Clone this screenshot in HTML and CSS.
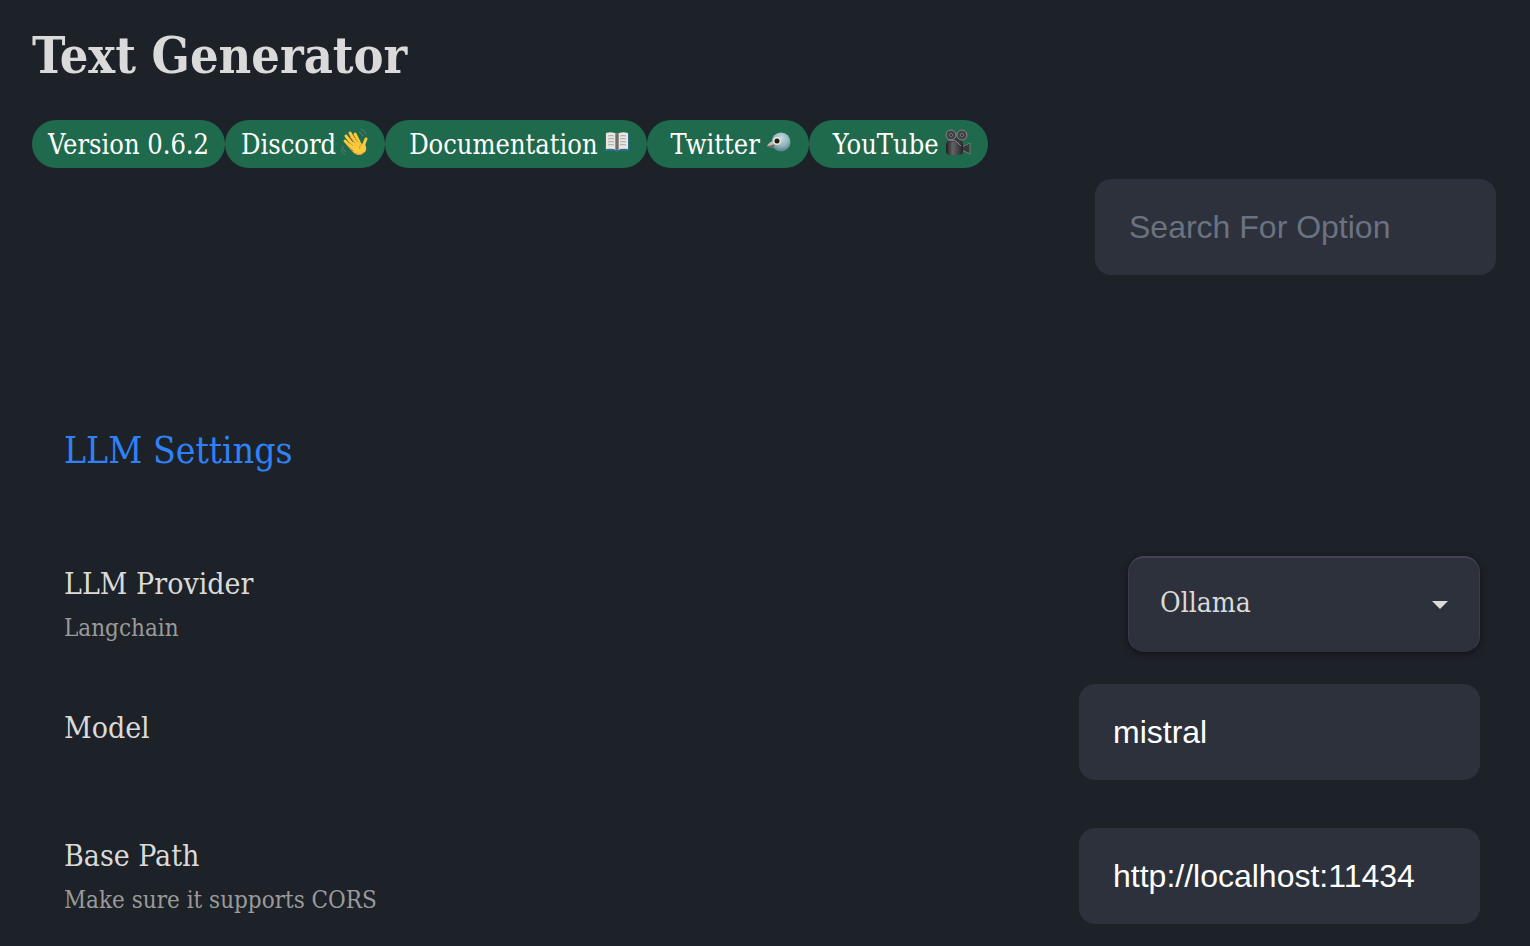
FILE: index.html
```html
<!DOCTYPE html>
<html lang="en">
<head>
    <meta charset="utf-8" />
    <title>Text Generator</title>
    <link rel="stylesheet" href="styles.css">
</head>
<body>
    <header class="header">
        <h1>Text Generator</h1>

        <nav class="badges">
            <a class="badge" href="#">Version 0.6.2</a>
            <a class="badge" href="#">Discord
                <svg class="icon" viewBox="0 0 28 28" aria-hidden="true">
                    <g fill="none" stroke="#fbc93d" stroke-width="3" stroke-linecap="round">
                        <path d="M11 20L4 13M12 17L5 8M15 15L9 5M18 14L14 6" />
                        <path d="M22 18L25 11" />
                    </g>
                    <path d="M8 16l9-5 4 5 3 0q3 6-1 9-5 4-10 0z" fill="#fbc93d" />
                    <path d="M5 16l7 8c4 3 8 3 11 0" fill="none" stroke="#e5962a" />
                    <path d="M7 13l5 5M9 9l5 6M13 8l4 6M21 16c-2 1-3 3-2 5" fill="none" stroke="#dd951f" />
                    <path d="M18 4q3 1 4 4M20 1q4 2 5 5M1 18q1 4 4 6M0 21q1 4 4 6" fill="none" stroke="#5f7a72" />
                </svg>
            </a>
            <a class="badge spaced" href="#">Documentation
                <svg class="icon" viewBox="0 0 28 28" aria-hidden="true">
                    <path d="M2 6h24v17H16l-2 1-2-1H2z" fill="#2f6d8e" />
                    <path d="M3 5q6-2 11 1 5-3 11-1v16q-6-1-11 1-5-2-11-1z" fill="#e9e7e2" />
                    <path d="M12 5l2 1 2-1v16l-2 1-2-1z" fill="#96938f" />
                    <path d="M14 6v16" stroke="#4b4947" />
                    <path d="M5 8q3-1 6 0M5 11q3-1 6 0M5 14q3-1 6 0M5 17q3-1 6 0M17 8q3-1 6 0M17 11q3-1 6 0M17 14q3-1 6 0M17 17q3-1 6 0" fill="none" stroke="#aaa8a5" />
                </svg>
            </a>
            <a class="badge spaced" href="#">Twitter
                <svg class="icon" viewBox="0 0 28 28" aria-hidden="true">
                    <defs>
                        <radialGradient id="bird" cx=".5" cy=".3" r=".7">
                            <stop offset="0" stop-color="#c1dde1" />
                            <stop offset=".6" stop-color="#8fb4ba" />
                            <stop offset="1" stop-color="#527f86" />
                        </radialGradient>
                    </defs>
                    <circle cx="16" cy="14" r="9.5" fill="url(#bird)" />
                    <path d="M8 13q-4 1-6 5l5 2q3-1 3-5z" fill="#c3b8b3" />
                    <path d="M2 18l5 2q2-1 3-4-4 2-8 2z" fill="#695f5c" />
                    <circle cx="12" cy="13" r="4" fill="#e8e3d8" />
                    <circle cx="12" cy="13" r="2.5" fill="#211d1c" />
                </svg>
            </a>
            <a class="badge spaced" href="#">YouTube
                <svg class="icon" viewBox="0 0 28 28" aria-hidden="true">
                    <defs>
                        <linearGradient id="camera" x2="1">
                            <stop offset="0" stop-color="#1d1d20" />
                            <stop offset=".4" stop-color="#626267" />
                            <stop offset="1" stop-color="#252528" />
                        </linearGradient>
                    </defs>
                    <path d="M18 19l8-4v11l-8-4z" fill="#38383b" stroke="#77777c" />
                    <rect x="2" y="13" width="17" height="14" rx="4" fill="url(#camera)" />
                    <path d="M6 8l11 1 2 5H3z" fill="#38383b" />
                    <circle cx="7" cy="7" r="5" fill="#434347" stroke="#85858a" />
                    <circle cx="18" cy="7" r="5" fill="#434347" stroke="#85858a" />
                    <circle cx="7" cy="7" r="1.5" fill="#202024" stroke="#77777c" />
                    <circle cx="18" cy="7" r="1.500" fill="#202024" stroke="#77777c" />
                    <path d="M4 12l8 1 5 5" fill="none" stroke="#85858a" />
                </svg>
            </a>
        </nav>

        <input class="field search" type="search" placeholder="Search For Option" aria-label="Search For Option" />
    </header>

    <main class="settings">
        <h2>LLM Settings</h2>

        <div class="row">
            <div class="info">
                <label for="provider">LLM Provider</label>
                <p>Langchain</p>
            </div>
            <div class="select-box">
                <select id="provider">
                    <option>Ollama</option>
                </select>
                <svg class="arrow" viewBox="0 0 16 8" aria-hidden="true"><path d="M0 0h16L8 8z" /></svg>
            </div>
        </div>

        <div class="row">
            <div class="info">
                <label for="model">Model</label>
            </div>
            <input class="field" id="model" type="text" value="mistral" />
        </div>

        <div class="row">
            <div class="info">
                <label for="basepath">Base Path</label>
                <p>Make sure it supports CORS</p>
            </div>
            <input class="field" id="basepath" type="text" value="http://localhost:11434" />
        </div>
    </main>
</body>
</html>
```

FILE: styles.css
```css
* {
    box-sizing: border-box;
}
body {
    margin: 0;
    background-color: #1d2128;
    color: #dadada;
    font-family: "DejaVu Serif Condensed", "DejaVu Serif", serif;
}
h1, h2, p {
    margin: 0;
}
.header {
    display: flex;
    flex-direction: column;
    padding: 24px 34px 0 32px;
}
h1 {
    font-size: 50px;
    line-height: 64px;
    margin-bottom: 32px;
}
.badges {
    display: flex;
    flex-wrap: wrap;
}
.badge {
    display: flex;
    align-items: center;
    gap: 5px;
    height: 48px;
    padding: 0 16px;
    border-radius: 24px;
    background-color: #1f6a4c;
    color: #ffffff;
    font-size: 27px;
    text-decoration: none;
}
.spaced {
    padding-left: 24px;
}
.icon {
    width: 28px;
    height: 28px;
    margin-bottom: 4px;
}
.field {
    width: 401px;
    height: 96px;
    padding: 0 34px;
    border: none;
    border-radius: 16px;
    background-color: #2d313b;
    color: #ffffff;
    font-family: "Liberation Sans", Arial, sans-serif;
    font-size: 32px;
}
.search {
    align-self: flex-end;
    margin-top: 11px;
}
.search::placeholder {
    color: #6b7280;
}
.settings {
    padding: 144px 50px 22px 64px;
}
h2 {
    color: #2f81f7;
    font-size: 37px;
    font-weight: normal;
    line-height: 64px;
    margin-bottom: 73px;
}
.row {
    display: flex;
    justify-content: space-between;
    align-items: center;
    margin-bottom: 48px;
}
.row:first-of-type {
    margin-bottom: 32px;
}
.row:last-child {
    margin-bottom: 0;
}
.info label {
    display: block;
    font-size: 30px;
    line-height: 48px;
}
.info label:only-child {
    padding-bottom: 8px;
}
.info p {
    color: #9a9a9a;
    font-size: 24px;
    line-height: 40px;
}
.select-box {
    position: relative;
    width: 352px;
}
.select-box select {
    appearance: none;
    width: 100%;
    height: 96px;
    padding: 0 32px 4px 31px;
    border: 1px solid #3a3e4a;
    border-top: 2px solid #404450;
    border-bottom-color: #2d313b;
    border-radius: 16px;
    background-color: #2d313b;
    box-shadow: 0 2px 6px #111418;
    color: #dadada;
    font-family: inherit;
    font-size: 28px;
}
.arrow {
    position: absolute;
    top: 45px;
    right: 32px;
    width: 16px;
    height: 8px;
    fill: #dadada;
    pointer-events: none;
}
```
